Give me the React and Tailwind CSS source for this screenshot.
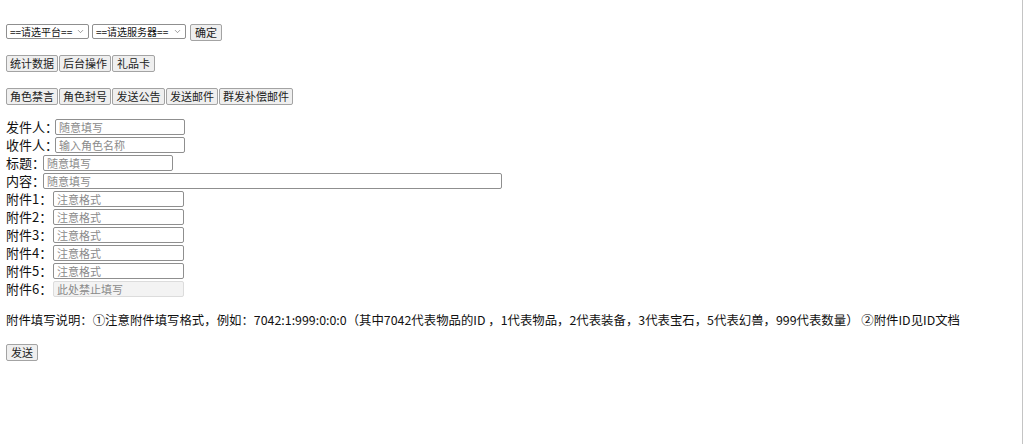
import { ChevronDown } from 'lucide-react';

const font = { fontFamily: '"Noto Sans CJK SC", "Microsoft YaHei", sans-serif' };

const Btn = ({ children, w }) => (
  <button
    className={`h-[17px] ${w} shrink-0 flex items-center justify-center bg-[#efefef] border border-[#a3a3a3] rounded-[2px] text-[11px] leading-none text-[#222]`}
  >
    {children}
  </button>
);

const Sel = ({ label, w }) => (
  <div className={`relative h-[15px] ${w} shrink-0 border border-[#8f8f8f] rounded-[2px] bg-white flex items-center pl-[3px] text-[10px] leading-none text-[#111] whitespace-nowrap`}>
    <span>{label}</span>
    <ChevronDown size={9} strokeWidth={1.5} className="absolute right-[3px] top-[2px] text-[#555]" />
  </div>
);

const Field = ({ label, lw, iw, placeholder, disabled }) => (
  <div className="h-[18px] flex items-center">
    <span className={`${lw} shrink-0 whitespace-nowrap text-[13px] leading-[18px] text-[#111]`}>{label}</span>
    <input
      disabled={disabled}
      placeholder={placeholder}
      className={`h-[16px] ${iw} px-[3px] text-[11px] leading-none rounded-[2px] outline-none placeholder:text-[#8a8a8a] ${
        disabled ? 'bg-[#f3f3f3] border border-[#dcdcdc]' : 'bg-white border border-[#8f8f8f]'
      }`}
    />
  </div>
);

export default function App() {
  return (
    <div className="h-[444px] flex bg-white overflow-hidden" style={font}>
      <div className="flex-1 pl-[6px] pt-[24px]">
        {/* platform / server */}
        <div className="flex items-start gap-[3px]">
          <Sel label="==请选平台==" w="w-[83px]" />
          <Sel label="==请选服务器==" w="w-[94px]" />
          <div className="ml-[1px]">
            <Btn w="w-[32px]">确定</Btn>
          </div>
        </div>

        <div className="mt-[14px] flex gap-[1px]">
          <Btn w="w-[52px]">统计数据</Btn>
          <Btn w="w-[52px]">后台操作</Btn>
          <Btn w="w-[43px]">礼品卡</Btn>
        </div>

        <div className="mt-[16px] flex gap-[1px]">
          <Btn w="w-[52px]">角色禁言</Btn>
          <Btn w="w-[52px]">角色封号</Btn>
          <Btn w="w-[53px]">发送公告</Btn>
          <Btn w="w-[52px]">发送邮件</Btn>
          <Btn w="w-[74px]">群发补偿邮件</Btn>
        </div>

        {/* mail form */}
        <div className="mt-[13px] flex flex-col">
          <Field label="发件人：" lw="w-[49px]" iw="w-[130px]" placeholder="随意填写" />
          <Field label="收件人：" lw="w-[49px]" iw="w-[130px]" placeholder="输入角色名称" />
          <Field label="标题：" lw="w-[37px]" iw="w-[130px]" placeholder="随意填写" />
          <Field label="内容：" lw="w-[37px]" iw="w-[459px]" placeholder="随意填写" />
          <Field label="附件1：" lw="w-[47px]" iw="w-[131px]" placeholder="注意格式" />
          <Field label="附件2：" lw="w-[47px]" iw="w-[131px]" placeholder="注意格式" />
          <Field label="附件3：" lw="w-[47px]" iw="w-[131px]" placeholder="注意格式" />
          <Field label="附件4：" lw="w-[47px]" iw="w-[131px]" placeholder="注意格式" />
          <Field label="附件5：" lw="w-[47px]" iw="w-[131px]" placeholder="注意格式" />
          <Field label="附件6：" lw="w-[47px]" iw="w-[131px]" placeholder="此处禁止填写" disabled />
        </div>

        <p className="mt-[14px] text-[12.4px] leading-[16px] text-[#111] whitespace-nowrap">
          附件填写说明：①注意附件填写格式，例如：7042:1:999:0:0:0（其中7042代表物品的ID ，1代表物品，2代表装备，3代表宝石，5代表幻兽，999代表数量） ②附件ID见ID文档
        </p>

        <div className="mt-[16px]">
          <Btn w="w-[32px]">发送</Btn>
        </div>
      </div>
      <div className="w-px bg-[#c4c4c4] mr-px shrink-0" />
    </div>
  );
}
